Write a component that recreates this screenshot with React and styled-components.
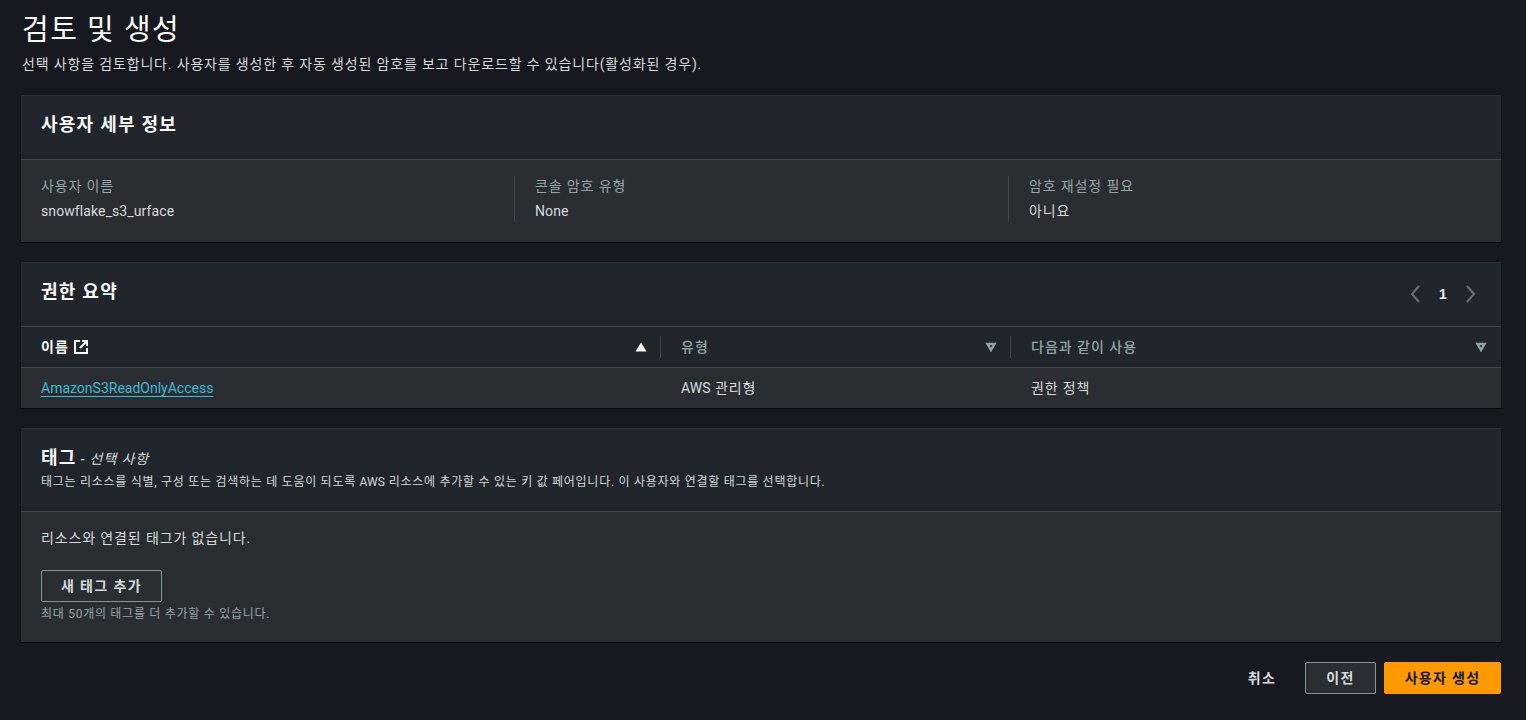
import React from "react";
import styled, { createGlobalStyle } from "styled-components";

const FONT = `Roboto, "Noto Sans CJK KR", "Noto Sans", sans-serif`;

const Global = createGlobalStyle`
  html, body { margin: 0; padding: 0; background: #16191f; }
  body { font-family: ${FONT}; color: #d5dbdb; font-size: 14px; line-height: 20px; letter-spacing: 0.87px; }
`;
const Latin = styled.span`letter-spacing: 0.1px;`;
const Page = styled.div`
  box-sizing: border-box; width: 1526px; height: 720px; overflow: hidden;
  padding: 10px 25px 0 22px; display: flex; flex-direction: column;
`;
const Title = styled.h1`
  margin: 0; font-size: 29px; line-height: 40px; font-weight: 400; color: #fafafa; letter-spacing: 1.5px;
`;
const Sub = styled.p`
  margin: 3px 0 0; font-size: 14px; line-height: 22px; color: #d5dbdb; height: 22px; letter-spacing: 0.84px;
`;
const Card = styled.section`
  background: #2a2e33; margin: ${p => p.$mt}px 0 0 -1px;
  border-top: 1px solid #2a2e33;
  box-shadow: 0 1px 1px 0 rgba(0,0,0,.6);
`;
const CardHead = styled.header`
  box-sizing: border-box; height: ${p => p.$h}px; background: #21252c;
  border-bottom: 1px solid #414750;
  padding: ${p => p.$pt}px 20px 0; display: flex; justify-content: space-between; align-items: flex-start;
`;
const CardTitle = styled.h2`
  margin: 0; font-size: 18px; line-height: 26px; font-weight: 700; color: #fafafa; letter-spacing: 1.25px;
`;
const Optional = styled.i`
  font-size: 14px; font-weight: 400; color: #d5dbdb; margin-left: 4px; letter-spacing: 0.9px;
`;
const Desc = styled.p`
  margin: 1px 0 0; font-size: 12px; line-height: 18px; color: #d5dbdb; letter-spacing: 0.72px;
`;
const Columns = styled.div`
  display: grid; grid-template-columns: 473px 494px 1fr; padding: 16px 20px 0; height: 66px;
`;
const Col = styled.div`
  height: 46px; padding-left: ${p => p.$first ? 0 : 20}px;
  border-left: ${p => p.$first ? "none" : "1px solid #414750"};
`;
const Label = styled.div`
  font-size: 14px; line-height: 20px; color: #95a5a6;
`;
const Value = styled.div`
  font-size: 14px; line-height: 20px; margin-top: 5px; color: #d5dbdb;
`;
const Pager = styled.div`
  display: flex; align-items: center; gap: 12px; padding-right: 2px; height: 26px; margin-top: 2px;
`;
const PageNum = styled.span`
  font-family: "Liberation Sans", sans-serif; font-size: 14px; font-weight: 700; color: #fafafa; width: 16px; text-align: center; letter-spacing: 0;
`;
const Row = styled.div`
  display: grid; grid-template-columns: 640px 350px 1fr; box-sizing: border-box; height: ${p => p.$h}px;
  background: ${p => p.$head ? "#21252c" : "#2a2e33"};
  border-bottom: ${p => p.$head ? "1px solid #414750" : "none"};
`;
const Th = styled.div`
  display: flex; align-items: center; justify-content: space-between; box-sizing: border-box;
  padding: 0 14px 0 20px; font-size: 14px; font-weight: ${p => p.$active ? 700 : 500};
  color: ${p => p.$active ? "#fafafa" : "#95a5a6"}; position: relative; letter-spacing: 1px;
`;
const ThLabel = styled.span`display: inline-flex; align-items: center; gap: 4px;`;
const Sep = styled.span`
  position: absolute; right: 0; top: 9px; height: 22px; width: 1px; background: #414750;
`;
const Td = styled.div`
  display: flex; align-items: center; padding-left: 20px; font-size: 14px; color: #d5dbdb; white-space: pre;
`;
const Link = styled.a`
  color: #44b9d6; text-decoration: underline; text-underline-offset: 3px; font-size: 14px; letter-spacing: 0;
`;
const Body = styled.div`
  padding: 16px 20px 0; height: 114px;
`;
const AddBtn = styled.button`
  display: block; box-sizing: border-box; width: 121px; height: 32px; margin-top: 22px;
  background: transparent; border: 1px solid #879596; border-radius: 2px;
  color: #d5dbdb; font: 700 14px/20px ${FONT}; letter-spacing: 1.4px;
`;
const Hint = styled.div`
  font-size: 12px; line-height: 18px; color: #95a5a6; margin-top: 3px; letter-spacing: 0.72px;
`;
const Footer = styled.footer`
  display: flex; justify-content: flex-end; align-items: center; gap: 8px; margin-top: 20px;
`;
const Btn = styled.button`
  box-sizing: border-box; height: 32px; width: ${p => p.$w}px; border-radius: 2px;
  font: 700 14px/20px ${FONT}; letter-spacing: 1.3px;
  background: ${p => p.$primary ? "#ff9900" : p.$plain ? "transparent" : "#2a2e33"};
  color: ${p => p.$primary ? "#16191f" : "#d5dbdb"};
  border: 1px solid ${p => p.$primary ? "#ff9900" : p.$plain ? "transparent" : "#879596"};
`;

const External = () => (
  <svg width="16" height="16" viewBox="0 0 16 16" fill="none" stroke="#fafafa" strokeWidth="2">
    <path d="M7 2H2v12h12V9" />
    <path d="M9 2h5v5M14 2 7 9" />
  </svg>
);
const SortUp = () => (
  <svg width="12" height="10" viewBox="0 0 12 10"><path d="M6 0.5 11.5 9.5H0.5z" fill="#fafafa" /></svg>
);
const SortDown = () => (
  <svg width="12" height="10" viewBox="0 0 12 10" fill="none" stroke="#95a5a6" strokeWidth="2.4"><path d="M2.5 2h7L6 8z" /></svg>
);
const Chevron = ({ d }) => (
  <svg width="16" height="20" viewBox="0 0 16 20" fill="none" stroke="#687078" strokeWidth="2"><path d={d} /></svg>
);

export default function App() {
  return (
    <Page>
      <Global />
      <Title>검토 및 생성</Title>
      <Sub>선택 사항을 검토합니다. 사용자를 생성한 후 자동 생성된 암호를 보고 다운로드할 수 있습니다(활성화된 경우).</Sub>
      <Card $mt={20}>
        <CardHead $h={64} $pt={16}><CardTitle>사용자 세부 정보</CardTitle></CardHead>
        <Columns>
          <Col $first><Label>사용자 이름</Label><Value><Latin>snowflake_s3_urface</Latin></Value></Col>
          <Col><Label>콘솔 암호 유형</Label><Value><Latin>None</Latin></Value></Col>
          <Col><Label>암호 재설정 필요</Label><Value>아니요</Value></Col>
        </Columns>
      </Card>
      <Card $mt={20}>
        <CardHead $h={64} $pt={16}>
          <CardTitle>권한 요약</CardTitle>
          <Pager>
            <Chevron d="M12 2 5 10l7 8" />
            <PageNum>1</PageNum>
            <Chevron d="M4 2l7 8-7 8" />
          </Pager>
        </CardHead>
        <Row $head $h={41}>
          <Th $active><ThLabel>이름 <External /></ThLabel><SortUp /><Sep /></Th>
          <Th>유형<SortDown /><Sep /></Th>
          <Th>다음과 같이 사용<SortDown /></Th>
        </Row>
        <Row $h={40}>
          <Td><Link href="#">AmazonS3ReadOnlyAccess</Link></Td>
          <Td><span><Latin>AWS</Latin> 관리형</span></Td>
          <Td>권한 정책</Td>
        </Row>
      </Card>
      <Card $mt={20}>
        <CardHead $h={83} $pt={16}>
          <div>
            <CardTitle>태그<Optional>- 선택 사항</Optional></CardTitle>
            <Desc>태그는 리소스를 식별, 구성 또는 검색하는 데 도움이 되도록 <Latin>AWS</Latin> 리소스에 추가할 수 있는 키 값 페어입니다. 이 사용자와 연결할 태그를 선택합니다.</Desc>
          </div>
        </CardHead>
        <Body>
          <div>리소스와 연결된 태그가 없습니다.</div>
          <AddBtn>새 태그 추가</AddBtn>
          <Hint>최대 50개의 태그를 더 추가할 수 있습니다.</Hint>
        </Body>
      </Card>
      <Footer>
        <Btn $plain $w={70}>취소</Btn>
        <Btn $w={71}>이전</Btn>
        <Btn $primary $w={117}>사용자 생성</Btn>
      </Footer>
    </Page>
  );
}
